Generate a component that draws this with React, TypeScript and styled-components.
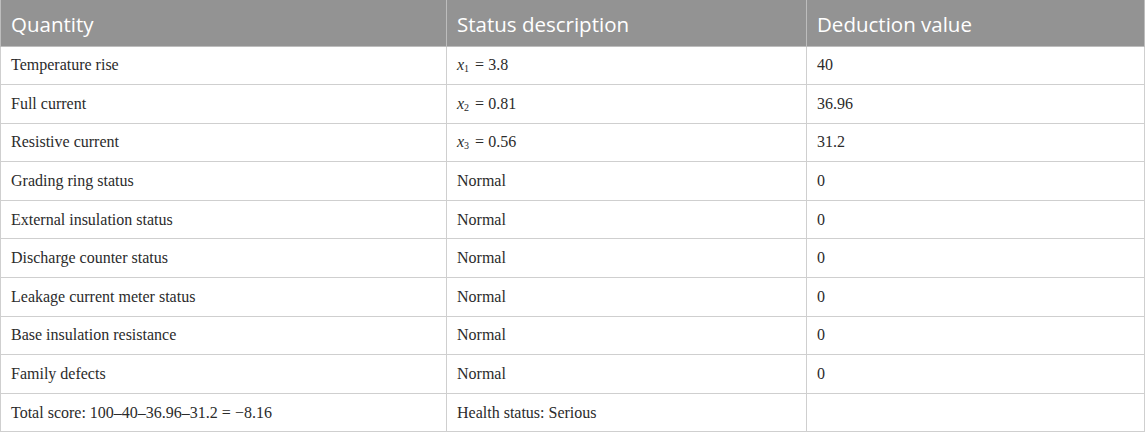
import React from "react";
import styled, { createGlobalStyle } from "styled-components";

const Global = createGlobalStyle`
  html, body { margin: 0; padding: 0; background: #fff; }
`;

const Table = styled.table`
  width: 1145px;
  border-collapse: collapse;
  table-layout: fixed;
  font-family: "Liberation Serif", "Times New Roman", serif;
  font-size: 16px;
  color: #2b2b2b;
`;

const HeadCell = styled.th`
  background: #939393;
  color: #fff;
  font-family: "Open Sans", "Noto Sans", sans-serif;
  font-weight: 400;
  font-size: 20.5px;
  text-align: left;
  padding: 3px 10px 0;
  height: 46px;
  box-sizing: border-box;
  border: 1px solid #bdbdbd;
  border-top: none;
`;

const Cell = styled.td`
  padding: 0 10px;
  height: 38.6px;
  box-sizing: border-box;
  border: 1px solid #cfcfcf;
  vertical-align: middle;
`;

const Var = styled.i`
  font-style: italic;
`;

const Sub = styled.sub`
  font-size: 10px;
  vertical-align: -2px;
  line-height: 0;
  margin-right: 2px;
`;

type Row = { q: string; s: React.ReactNode; d: string };

const x = (n: number, v: string) => (
  <>
    <Var>x</Var>
    <Sub>{n}</Sub> = {v}
  </>
);

const rows: Row[] = [
  { q: "Temperature rise", s: x(1, "3.8"), d: "40" },
  { q: "Full current", s: x(2, "0.81"), d: "36.96" },
  { q: "Resistive current", s: x(3, "0.56"), d: "31.2" },
  { q: "Grading ring status", s: "Normal", d: "0" },
  { q: "External insulation status", s: "Normal", d: "0" },
  { q: "Discharge counter status", s: "Normal", d: "0" },
  { q: "Leakage current meter status", s: "Normal", d: "0" },
  { q: "Base insulation resistance", s: "Normal", d: "0" },
  { q: "Family defects", s: "Normal", d: "0" },
  { q: "Total score: 100\u201340\u201336.96\u201331.2 = \u22128.16", s: "Health status: Serious", d: "" },
];

export default function App() {
  return (
    <>
      <Global />
      <Table>
        <colgroup>
          <col style={{ width: 446 }} />
          <col style={{ width: 360 }} />
          <col />
        </colgroup>
        <thead>
          <tr>
            <HeadCell>Quantity</HeadCell>
            <HeadCell>Status description</HeadCell>
            <HeadCell>Deduction value</HeadCell>
          </tr>
        </thead>
        <tbody>
          {rows.map((r, i) => (
            <tr key={i}>
              <Cell>{r.q}</Cell>
              <Cell>{r.s}</Cell>
              <Cell>{r.d}</Cell>
            </tr>
          ))}
        </tbody>
      </Table>
    </>
  );
}
